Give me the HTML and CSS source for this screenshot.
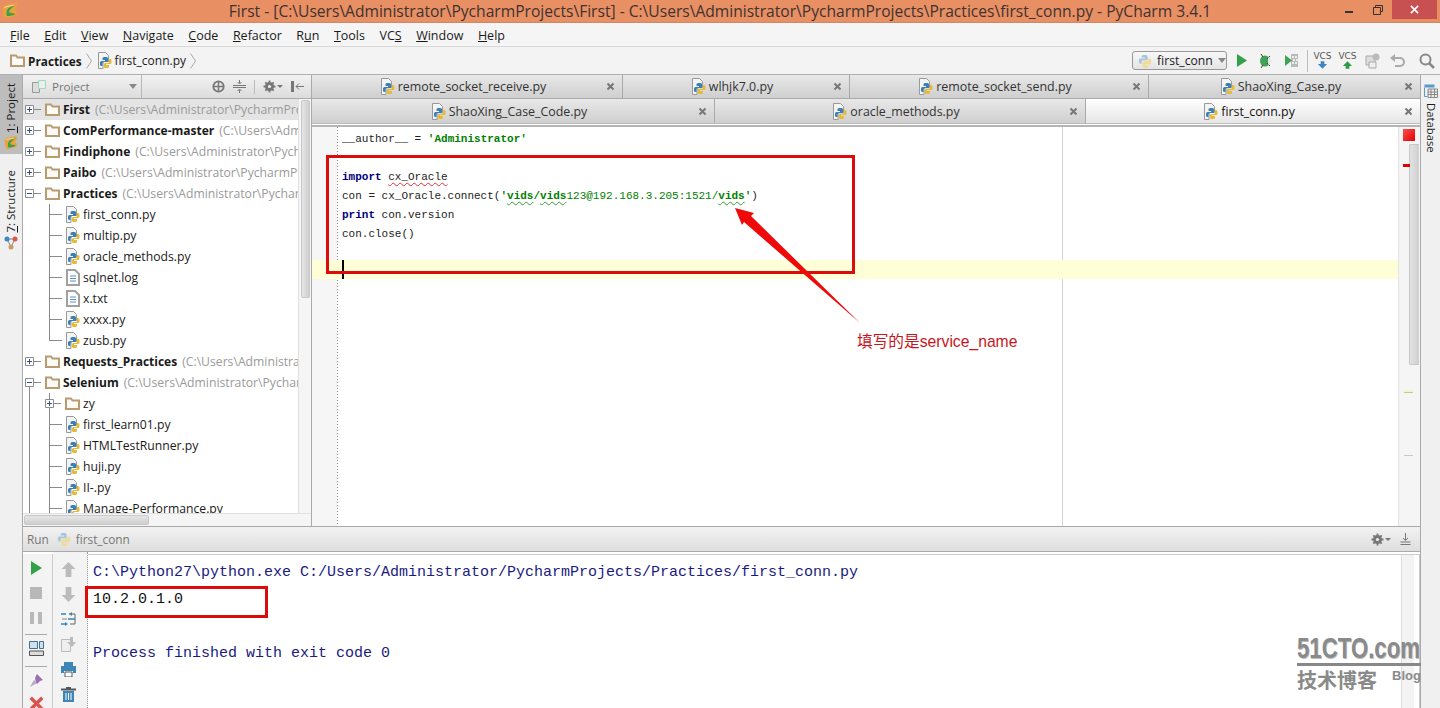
FILE: index.html
```html
<!DOCTYPE html>
<html lang="en">
<head>
<meta charset="utf-8">
<title>PyCharm</title>
<link rel="stylesheet" href="styles.css">
</head>
<body>
<svg class="defs" width="0" height="0" aria-hidden="true">
  <symbol id="py" viewBox="0 0 14 17">
    <path d="M.5.5h7l3 3v6H5v7H.5z" fill="#f4f4f4" stroke="#999"/>
    <path d="M6 5h2.5A1.5 1.5 0 0 1 10 6.500V10H6a1.500 1.500 0 0 0-1.500 1.500V14h-1A1.500 1.500 0 0 1 2 12.500v-2A1.500 1.500 0 0 1 3.500 9H7V8H4.500V6.500A1.500 1.500 0 0 1 6 5z" fill="#3e7fb3"/>
    <path d="M11 7h1a1.500 1.500 0 0 1 1.500 1.500v2A1.500 1.500 0 0 1 12 12H8v1h3v1.500A1.500 1.500 0 0 1 9.500 16h-2A1.500 1.500 0 0 1 6 14.500V12a1.500 1.500 0 0 1 1.500-1H10a1 1 0 0 0 1-1z" fill="#e6bb33"/>
  </symbol>
  <symbol id="snake" viewBox="0 0 16 16">
    <path d="M6 1h3a2 2 0 0 1 2 2v4H6a2 2 0 0 0-2 2v2H3a2 2 0 0 1-2-2V7a2 2 0 0 1 2-2h5V4H4V3a2 2 0 0 1 2-2z" fill="#a9c4dc"/>
    <path d="M12 5h1a2 2 0 0 1 2 2v3a2 2 0 0 1-2 2H8v1h4v1a2 2 0 0 1-2 2H7a2 2 0 0 1-2-2V10a2 2 0 0 1 2-2h3a2 2 0 0 0 2-2z" fill="#f0dc9a"/>
  </symbol>
  <symbol id="folder" viewBox="0 0 15 13">
    <path d="M1 12V1.500h5l1.500 2H14V12z" fill="#fbfaf7" stroke="#b89c70" stroke-width="2"/>
  </symbol>
  <symbol id="txt" viewBox="0 0 14 17">
    <path d="M1 1h8l4 4v11H1z" fill="#fff" stroke="#a0a0a0" stroke-width="2"/>
    <path d="M4 7h6M4 9.500h6M4 12h6" stroke="#5b8fc0"/>
  </symbol>
  <symbol id="plus" viewBox="0 0 9 9">
    <path d="M.5.5h8v8h-8z" fill="#fff" stroke="#8c8c8c"/>
    <path d="M2 4.500h5M4.500 2v5" stroke="#33508c"/>
  </symbol>
  <symbol id="minus" viewBox="0 0 9 9">
    <path d="M.5.5h8v8h-8z" fill="#fff" stroke="#8c8c8c"/>
    <path d="M2 4.500h5" stroke="#33508c"/>
  </symbol>
  <symbol id="x" viewBox="0 0 9 9">
    <path d="M1.500 1.500l6 6M7.500 1.500l-6 6" stroke="#777" stroke-width="2"/>
  </symbol>
  <symbol id="logo" viewBox="0 0 16 16">
    <path d="M1 3.500C5 1 10 .5 15 .5c0 3-1 5-3 6 2 1 3 3 3 5-4 2-8 3-12 3.500C1 11 .5 7 1 3.500z" fill="#e9a33a"/>
    <path d="M13 2.500C8 3 5 5.500 4.500 9c-.2 1.500 0 3 .5 4 3 0 6-.5 8.500-2-2-1-5-1.200-6.500-1.500 0-2.500 3-5 6-7z" fill="#3f9d4d"/>
    <path d="M2.500 4.500c3-1.200 6-1.800 9-2" fill="none" stroke="#f6dba5"/>
  </symbol>
  <symbol id="gear" viewBox="0 0 13 13">
    <circle cx="6.500" cy="6.500" r="3.300" fill="none" stroke="#777" stroke-width="2.400"/>
    <path d="M6.500.5v12M.5 6.500h12M2.300 2.300l8.400 8.400M10.700 2.300l-8.400 8.400" stroke="#777" stroke-width="1.800"/>
    <circle cx="6.500" cy="6.500" r="1.600" fill="#eee"/>
  </symbol>
  <symbol id="play" viewBox="0 0 13 16"><path d="M1 1l11 7-11 7z" fill="#34a04a"/></symbol>
</svg>

<div class="app">
  <header class="titlebar">
    <svg class="logo"><use href="#logo"/></svg>
    <div class="title">First - [C:\Users\Administrator\PycharmProjects\First] - C:\Users\Administrator\PycharmProjects\Practices\first_conn.py - PyCharm 3.4.1</div>
    <div class="winctl">
      <span class="win-min"></span>
      <svg class="win-max" viewBox="0 0 10 10"><path d="M2.500 2.500V.5h7v6h-2M.5 2.500h7v7h-7z" fill="none" stroke="#333"/></svg>
      <span class="win-close"><svg viewBox="0 0 10 10"><path d="M1 1l8 8M9 1l-8 8" stroke="#fff" stroke-width="1.800"/></svg></span>
    </div>
  </header>

  <nav class="menubar">
    <span><u>F</u>ile</span><span><u>E</u>dit</span><span><u>V</u>iew</span><span><u>N</u>avigate</span><span><u>C</u>ode</span><span><u>R</u>efactor</span><span>R<u>u</u>n</span><span><u>T</u>ools</span><span>VC<u>S</u></span><span><u>W</u>indow</span><span><u>H</u>elp</span>
  </nav>

  <div class="navbar">
    <svg class="i-folder"><use href="#folder"/></svg>
    <b class="crumb">Practices</b>
    <svg class="chev" viewBox="0 0 6 16"><path d="M.5.5l5 7.500-5 7.500" fill="none" stroke="#aaa"/></svg>
    <svg class="i-py"><use href="#py"/></svg>
    <span class="crumb-file">first_conn.py</span>
    <svg class="chev" viewBox="0 0 6 16"><path d="M.5.5l5 7.500-5 7.500" fill="none" stroke="#aaa"/></svg>
    <div class="nav-tools">
      <div class="combo">
        <svg class="i-snake"><use href="#snake"/></svg>
        <span>first_conn</span>
        <i class="caret"></i>
      </div>
      <svg class="t-play"><use href="#play"/></svg>
      <svg class="t-bug" viewBox="0 0 16 16"><ellipse cx="7" cy="8" rx="5" ry="5.500" fill="#3fa355"/><path d="M12 3l-3 3M12 13l-3-3M13 8h-3M3 1l2 3M3 15l2-3" stroke="#3a3a3a"/><path d="M10 4l4 4-4 4z" fill="#e6e6e6"/></svg>
      <svg class="t-cov" viewBox="0 0 15 15"><path d="M1 2l7 5.500L1 13z" fill="#3fa355"/><path d="M7 1h7v13H7z" fill="#888" opacity=".55"/><path d="M8 3h2v2H8zM11 3h2v2h-2zM9 6h2v2H9zM12 6h2v2h-2zM8 9h2v2H8zM11 9h2v2h-2z" fill="#eee"/></svg>
      <i class="t-div"></i>
      <span class="vcs"><em>VCS</em><svg viewBox="0 0 12 8"><path d="M4 0h4v3h3L6 8 1 3h3z" fill="#3d86c6"/></svg></span>
      <span class="vcs up"><em>VCS</em><svg viewBox="0 0 12 8"><path d="M4 8h4V5h3L6 0 1 5h3z" fill="#2d9a45"/></svg></span>
      <svg class="t-hist" viewBox="0 0 16 16"><path d="M1 3h9v9H1z" fill="#ddd" stroke="#aaa"/><path d="M4 9h7v6H4z" fill="#eee" stroke="#aaa"/><circle cx="11" cy="4" r="3.500" fill="#bbb"/></svg>
      <svg class="t-undo" viewBox="0 0 15 15"><path d="M4 5h6a3.500 3.500 0 0 1 0 8H5" fill="none" stroke="#aaa" stroke-width="2"/><path d="M5 1v8L0 5z" fill="#aaa"/></svg>
      <svg class="t-search" viewBox="0 0 16 16"><circle cx="6.500" cy="6.500" r="5" fill="none" stroke="#888" stroke-width="2"/><path d="M10 10l5 5" stroke="#888" stroke-width="2.500"/></svg>
    </div>
  </div>

  <div class="main">
    <aside class="leftstrip">
      <div class="vtab active"><span><u>1</u>: Project</span><svg class="vtab-ic"><use href="#logo"/></svg></div>
      <div class="vtab"><span><u>7</u>: Structure</span><svg class="vtab-ic" viewBox="0 0 14 14"><path d="M3 3l4 8 4-8" stroke="#888" fill="none"/><path d="M3 3h8" stroke="#888"/><circle cx="3" cy="3" r="2.500" fill="#3f86c4"/><circle cx="11" cy="3" r="2.500" fill="#d65a4a"/><circle cx="7" cy="11" r="2.500" fill="#c79a62"/></svg></div>
    </aside>

    <div class="center">
      <div class="top">
        <section class="project">
          <div class="proj-head">
            <div class="proj-title">
              <svg class="ph-ic" viewBox="0 0 14 13"><path d="M.5 2.500h7v10h-7z" fill="#ddd" stroke="#999"/><path d="M6.500.5h7v8h-7z" fill="#eee" stroke="#9db"/></svg>
              <span>Project</span>
              <i class="caret"></i>
            </div>
            <div class="proj-tools">
              <svg viewBox="0 0 13 13"><circle cx="6.500" cy="6.500" r="5.200" fill="none" stroke="#777" stroke-width="1.800"/><path d="M6.500 1v11M1 6.500h11" stroke="#777" stroke-width="1.500"/></svg>
              <svg viewBox="0 0 13 13"><path d="M0 5.500h13M0 7.500h13" stroke="#777"/><path d="M6.500 0v3M4.500 2l2 2 2-2M6.500 13v-3M4.500 11l2-2 2 2" stroke="#777" fill="none"/></svg>
              <i class="t-div short"></i>
              <svg class="gear"><use href="#gear"/></svg>
              <i class="mini-caret"></i>
              <svg viewBox="0 0 13 13"><path d="M1.500 1v11" stroke="#777" stroke-width="3"/><path d="M5 6.500h8M8 3.500l-3 3 3 3" stroke="#777" fill="none"/></svg>
            </div>
          </div>
          <div class="proj-body">
            <div class="tree">
              <div class="row root sel"><svg class="exp"><use href="#plus"/></svg><svg class="i-folder"><use href="#folder"/></svg><b>First</b><span class="path">(C:\Users\Administrator\PycharmProjects\First)</span></div>
              <div class="row root"><svg class="exp"><use href="#plus"/></svg><svg class="i-folder"><use href="#folder"/></svg><b>ComPerformance-master</b><span class="path">(C:\Users\Administrator\PycharmProjects)</span></div>
              <div class="row root"><svg class="exp"><use href="#plus"/></svg><svg class="i-folder"><use href="#folder"/></svg><b>Findiphone</b><span class="path">(C:\Users\Administrator\PycharmProjects)</span></div>
              <div class="row root"><svg class="exp"><use href="#plus"/></svg><svg class="i-folder"><use href="#folder"/></svg><b>Paibo</b><span class="path">(C:\Users\Administrator\PycharmProjects)</span></div>
              <div class="row root"><svg class="exp"><use href="#minus"/></svg><svg class="i-folder"><use href="#folder"/></svg><b>Practices</b><span class="path">(C:\Users\Administrator\PycharmProjects)</span></div>
              <div class="row leaf"><svg class="i-py"><use href="#py"/></svg><span>first_conn.py</span></div>
              <div class="row leaf"><svg class="i-py"><use href="#py"/></svg><span>multip.py</span></div>
              <div class="row leaf"><svg class="i-py"><use href="#py"/></svg><span>oracle_methods.py</span></div>
              <div class="row leaf"><svg class="i-py"><use href="#txt"/></svg><span>sqlnet.log</span></div>
              <div class="row leaf"><svg class="i-py"><use href="#txt"/></svg><span>x.txt</span></div>
              <div class="row leaf"><svg class="i-py"><use href="#py"/></svg><span>xxxx.py</span></div>
              <div class="row leaf last"><svg class="i-py"><use href="#py"/></svg><span>zusb.py</span></div>
              <div class="row root"><svg class="exp"><use href="#plus"/></svg><svg class="i-folder"><use href="#folder"/></svg><b>Requests_Practices</b><span class="path">(C:\Users\Administrator\PycharmProjects)</span></div>
              <div class="row root open"><svg class="exp"><use href="#minus"/></svg><svg class="i-folder"><use href="#folder"/></svg><b>Selenium</b><span class="path">(C:\Users\Administrator\PycharmProjects)</span></div>
              <div class="row sub"><svg class="exp"><use href="#plus"/></svg><svg class="i-folder"><use href="#folder"/></svg><span>zy</span></div>
              <div class="row leaf cont"><svg class="i-py"><use href="#py"/></svg><span>first_learn01.py</span></div>
              <div class="row leaf cont"><svg class="i-py"><use href="#py"/></svg><span>HTMLTestRunner.py</span></div>
              <div class="row leaf cont"><svg class="i-py"><use href="#py"/></svg><span>huji.py</span></div>
              <div class="row leaf cont"><svg class="i-py"><use href="#py"/></svg><span>II-.py</span></div>
              <div class="row leaf cont"><svg class="i-py"><use href="#py"/></svg><span>Manage-Performance.py</span></div>
            </div>
            <div class="vscroll"><i></i></div>
          </div>
          <div class="hscroll"><i></i></div>
        </section>

        <section class="editor">
          <div class="tabrow">
            <div class="tab w311"><i></i><span class="tab-label"><svg class="i-py"><use href="#py"/></svg>remote_socket_receive.py</span><svg class="tab-x"><use href="#x"/></svg></div>
            <div class="tab w227"><i></i><span class="tab-label"><svg class="i-py"><use href="#py"/></svg>wlhjk7.0.py</span><svg class="tab-x"><use href="#x"/></svg></div>
            <div class="tab w299"><i></i><span class="tab-label"><svg class="i-py"><use href="#py"/></svg>remote_socket_send.py</span><svg class="tab-x"><use href="#x"/></svg></div>
            <div class="tab w271"><i></i><span class="tab-label"><svg class="i-py"><use href="#py"/></svg>ShaoXing_Case.py</span><svg class="tab-x"><use href="#x"/></svg></div>
          </div>
          <div class="tabrow second">
            <div class="tab w403"><i></i><span class="tab-label"><svg class="i-py"><use href="#py"/></svg>ShaoXing_Case_Code.py</span><svg class="tab-x"><use href="#x"/></svg></div>
            <div class="tab w371"><i></i><span class="tab-label"><svg class="i-py"><use href="#py"/></svg>oracle_methods.py</span><svg class="tab-x"><use href="#x"/></svg></div>
            <div class="tab w334 on"><i></i><span class="tab-label"><svg class="i-py"><use href="#py"/></svg>first_conn.py</span><svg class="tab-x"><use href="#x"/></svg></div>
          </div>
          <div class="edit-body">
            <div class="code">
              <div class="ln">__author__ = <s>'Administrator'</s></div>
              <div class="ln"></div>
              <div class="ln"><b>import</b> <span class="err">cx_Oracle</span></div>
              <div class="ln">con = cx_Oracle.connect(<s>'<span class="typo">vids</span>/<span class="typo">vids</span><span class="num">123@192.168.3.205:1521/</span><span class="typo">vids</span>'</s>)</div>
              <div class="ln"><b>print</b> con.version</div>
              <div class="ln">con.close()</div>
              <div class="ln"></div>
              <div class="ln cur"><i class="caretline"></i></div>
            </div>
            <div class="stripe">
              <i class="ok"></i>
              <i class="thumb"></i>
              <i class="mark-r"></i>
              <i class="mark-y"></i>
              <i class="mark-y2"></i>
            </div>
          </div>
        </section>
      </div>

      <section class="run">
        <div class="run-head">
          <span>Run</span>
          <svg class="i-snake"><use href="#snake"/></svg>
          <span>first_conn</span>
          <div class="run-tools">
            <svg class="gear"><use href="#gear"/></svg>
            <i class="mini-caret"></i>
            <svg class="pin" viewBox="0 0 12 13"><path d="M6 0v7M3.500 5L6 7.500 8.500 5M1 9h10M1 11.500h10" stroke="#777" fill="none"/></svg>
          </div>
        </div>
        <div class="run-body">
          <div class="rcol c1">
            <svg class="r-play"><use href="#play"/></svg>
            <i class="r-stop"></i>
            <i class="r-pause"></i>
            <i class="r-sep"></i>
            <svg class="r-ic" viewBox="0 0 15 15"><path d="M.5.5h8v7h-8zM10.500.5h4v7h-4z" fill="#cfe0ee" stroke="#47708f"/><path d="M.5 10h14v4.500H.5z" fill="#ddd" stroke="#555"/></svg>
            <i class="r-sep"></i>
            <svg class="r-ic" viewBox="0 0 15 15"><path d="M8 1l6 6-3 1-3 3-1-1-1-5z" fill="#9b6fb3"/><path d="M5 7l-4 7 7-4" fill="#b9a3c6"/></svg>
            <svg class="r-ic" viewBox="0 0 13 13"><path d="M1.500 1.500l10 10M11.500 1.500l-10 10" stroke="#d9534f" stroke-width="3"/></svg>
          </div>
          <div class="rcol c2">
            <svg class="r-ic" viewBox="0 0 13 13"><path d="M6.500 0l6 6H9v7H4V6H.5z" fill="#bbb"/></svg>
            <svg class="r-ic" viewBox="0 0 13 13"><path d="M6.500 13l6-6H9V0H4v7H.5z" fill="#bbb"/></svg>
            <svg class="r-ic" viewBox="0 0 15 15"><path d="M0 2h5M0 12h5M7 7h7" stroke="#3d86b6" stroke-width="1.500"/><path d="M8 2h6v10H9" stroke="#666" fill="none"/><path d="M1 7h5" stroke="#888"/><path d="M11 0l-3 2 3 2zM4 10l3 2-3 2z" fill="#3d86b6"/></svg>
            <svg class="r-ic" viewBox="0 0 15 15"><path d="M.5 2.500h9v12h-9z" fill="#eee" stroke="#bbb"/><path d="M9 0v5H6l5 5 4-5h-3V0z" fill="#bbb"/></svg>
            <svg class="r-ic" viewBox="0 0 15 15"><path d="M3 0h9v4H3z" fill="#3d86b6"/><path d="M0 4h15v7h-3V9H3v2H0z" fill="#3d86b6"/><path d="M4 10h7v5H4z" fill="#fff" stroke="#555"/></svg>
            <svg class="r-ic" viewBox="0 0 15 15"><path d="M0 2.500h15" stroke="#555" stroke-width="2"/><path d="M5 1h5" stroke="#555" stroke-width="2"/><path d="M2 4h11v11H2z" fill="#3d86b6"/><path d="M5 6v7M7.500 6v7M10 6v7" stroke="#fff"/></svg>
          </div>
          <div class="console">
            <pre class="out cmd">C:\Python27\python.exe C:/Users/Administrator/PycharmProjects/Practices/first_conn.py</pre>
            <pre class="out">10.2.0.1.0</pre>
            <pre class="out"> </pre>
            <pre class="out cmd">Process finished with exit code 0</pre>
          </div>
          <div class="con-stripe"></div>
        </div>
      </section>
    </div>

    <aside class="rightstrip">
      <svg class="db" viewBox="0 0 14 14"><path d="M.5.5h10v3h-10z" fill="#5b9ac9"/><path d="M.5 3.500v9h3" fill="none" stroke="#5b9ac9"/><path d="M4 5h9.500v8.500H4z" fill="#eee" stroke="#888"/><path d="M4 8h9.500M4 10.500h9.500M7 5v8.500M10.500 5v8.500" stroke="#888"/></svg>
      <span>Database</span>
    </aside>
  </div>

  <div class="anno box1"></div>
  <div class="anno box2"></div>
  <svg class="anno arrow" viewBox="0 0 140 130"><polygon points="5,2 24,7 21,10 130,117 14,16 12,19" fill="#ee0a0a"/></svg>
  <div class="anno note">填写的是service_name</div>
  <div class="anno mark">
    <div class="mark-top">51CTO.com</div>
    <div class="mark-line"></div>
    <div class="mark-sub"><span>技术博客</span><em>Blog</em></div>
  </div>
</div>
</body>
</html>
```
FILE: styles.css
```css
* { box-sizing: border-box; }
html, body { margin: 0; height: 100%; overflow: hidden; }
body { font: 12.2px "Open Sans", "Liberation Sans", sans-serif; color: #1a1a1a; background: #f0f0f0; }
.defs { position: absolute; }
svg { display: block; flex: none; }
.app { position: relative; width: 1440px; height: 708px; display: flex; flex-direction: column; overflow: hidden; }

/* title */
.titlebar { height: 23px; background: #e98f64; border-bottom: 1px solid #c98a6a; display: grid; grid-template-columns: 1fr auto 1fr; align-items: center; flex: none; }
.logo { width: 16px; height: 16px; margin-left: 2px; }
.title { font-size: 15.6px; color: #3d3330; white-space: nowrap; margin-top: -1px; }
.winctl { justify-self: end; display: flex; align-items: flex-start; height: 100%; padding-right: 3px; }
.win-min { width: 8px; height: 2px; background: #333; margin: 11px 0 0; }
.win-max { width: 10px; height: 10px; margin: 5px 0 0 20px; }
.win-close { width: 45px; height: 19px; margin-left: 9px; background: #c75050; display: flex; align-items: center; justify-content: center; }
.win-close svg { width: 9px; height: 9px; }

/* menu */
.menubar { height: 24px; background: #f5f5f5; border-bottom: 1px solid #d8d8d8; display: flex; align-items: center; gap: 14.5px; padding: 1px 0 0 10px; flex: none; font-size: 12.5px; }

/* nav */
.navbar { height: 28px; background: #f3f3f3; border-bottom: 1px solid #b0b0b0; display: flex; align-items: center; padding: 0 5px 0 10px; flex: none; }
.i-folder { width: 15px; height: 13px; }
.crumb { margin-left: 3px; font-weight: 700; font-size: 11.8px; }
.chev { width: 6px; height: 16px; margin: 0 6px 0 4px; }
.i-py { width: 14px; height: 17px; }
.crumb-file { margin-left: 3px; font-size: 12px; }
.navbar .chev:last-of-type { margin-left: 4px; }
.nav-tools { margin-left: auto; display: flex; align-items: center; }
.combo { width: 95px; height: 19px; border: 1px solid #999; border-radius: 3px; background: linear-gradient(#f8f8f8, #e4e4e4); display: flex; align-items: center; padding: 0 5px; gap: 5px; }
.i-snake { width: 14px; height: 14px; }
.caret { width: 0; height: 0; border: 4px solid transparent; border-top: 5px solid #888; border-bottom: 0; margin-left: auto; }
.t-play { width: 12px; height: 15px; margin-left: 9px; }
.t-bug { width: 16px; height: 16px; margin-left: 10px; }
.t-cov { width: 15px; height: 15px; margin-left: 10px; }
.t-div { width: 1px; height: 22px; background: #bbb; margin-left: 8px; }
.t-div.short { height: 14px; margin: 0; }
.vcs { width: 15px; height: 19px; margin-left: 7px; display: flex; flex-direction: column; align-items: center; }
.vcs + .vcs { margin-left: 10px; }
.vcs em { font: 9px/10px "DejaVu Sans", sans-serif; color: #555; }
.vcs svg { width: 11px; height: 8px; }
.t-hist { width: 16px; height: 16px; margin-left: 10px; }
.t-undo { width: 15px; height: 15px; margin-left: 9px; }
.t-search { width: 16px; height: 16px; margin-left: 14px; }

/* main */
.main { flex: 1; min-height: 0; display: flex; }
.leftstrip { width: 23px; flex: none; background: #f0f0f0; border-right: 1px solid #aaa; display: flex; flex-direction: column; gap: 8px; }
.vtab { width: 22px; display: flex; flex-direction: column; align-items: center; gap: 3px; padding: 8px 0 4px; }
.vtab.active { background: #bdbdbd; }
.vtab span { writing-mode: vertical-rl; transform: rotate(180deg); font-size: 11.5px; line-height: 22px; }
.vtab-ic { width: 14px; height: 14px; }
.center { flex: 1; min-width: 0; display: flex; flex-direction: column; }
.top { height: 452px; display: flex; flex: none; border-bottom: 1px solid #a8a8a8; }
.project { width: 289px; flex: none; display: flex; flex-direction: column; border-right: 1px solid #aaa; background: #fff; }
.proj-head { height: 24px; background: linear-gradient(#f2f2f2, #dcdcdc); border-bottom: 1px solid #aaa; display: flex; align-items: center; flex: none; }
.proj-title { width: 119px; height: 100%; display: flex; align-items: center; gap: 6px; padding: 0 4px 0 9px; border-right: 1px solid #b8b8b8; color: #777; font-size: 11.5px; }
.ph-ic { width: 14px; height: 13px; }
.proj-tools { flex: 1; display: flex; align-items: center; justify-content: flex-end; gap: 8px; padding-right: 7px; }
.proj-tools svg { width: 13px; height: 13px; }
.mini-caret { width: 0; height: 0; border: 3px solid transparent; border-top: 3px solid #777; border-bottom: 0; margin-left: -7px; }
.proj-body { flex: 1; min-height: 0; display: flex; }
.tree { flex: 1; min-width: 0; overflow: hidden; }
.row { height: 21px; display: flex; align-items: center; white-space: nowrap; overflow: hidden; font-size: 12.2px; }
.row b { font-weight: 700; font-size: 12px; }
.row > .path { color: #9a9a9a; margin-left: 5px; }
.row.sel { background: #e4e4e4; }
.root { padding-left: 2px; background: linear-gradient(#8a8a8a, #8a8a8a) 11px 10px / 7px 1px no-repeat; }
.root.open { background: linear-gradient(#8a8a8a, #8a8a8a) 11px 10px / 7px 1px no-repeat, linear-gradient(#8a8a8a, #8a8a8a) 6px 14px / 1px 7px no-repeat; }
.root.sel { background: linear-gradient(#8a8a8a, #8a8a8a) 11px 10px / 7px 1px no-repeat, #e4e4e4; }
.exp { width: 9px; height: 9px; }
.root .i-folder { margin-left: 11px; margin-right: 3px; }
.leaf { padding-left: 43px; background:
  linear-gradient(#8a8a8a, #8a8a8a) 26px 0 / 1px 100% no-repeat,
  linear-gradient(#8a8a8a, #8a8a8a) 26px 10px / 13px 1px no-repeat; }
.leaf.last { background:
  linear-gradient(#8a8a8a, #8a8a8a) 26px 0 / 1px 11px no-repeat,
  linear-gradient(#8a8a8a, #8a8a8a) 26px 10px / 13px 1px no-repeat; }
.leaf.cont { background:
  linear-gradient(#8a8a8a, #8a8a8a) 6px 0 / 1px 100% no-repeat,
  linear-gradient(#8a8a8a, #8a8a8a) 26px 0 / 1px 100% no-repeat,
  linear-gradient(#8a8a8a, #8a8a8a) 26px 10px / 13px 1px no-repeat; }
.leaf > span { margin-left: 3px; }
.sub { padding-left: 22px; background:
  linear-gradient(#8a8a8a, #8a8a8a) 6px 0 / 1px 100% no-repeat,
  linear-gradient(#8a8a8a, #8a8a8a) 26px 0 / 1px 6px no-repeat,
  linear-gradient(#8a8a8a, #8a8a8a) 26px 15px / 1px 6px no-repeat,
  linear-gradient(#8a8a8a, #8a8a8a) 31px 10px / 7px 1px no-repeat; }
.sub .i-folder { margin-left: 11px; margin-right: 3px; }
.vscroll { width: 13px; flex: none; background: #f5f5f5; border-left: 1px solid #e0e0e0; padding: 1px 1px 0 2px; }
.vscroll i { display: block; height: 198px; background: linear-gradient(90deg, #e6e6e6, #cfcfcf); border: 1px solid #c8c8c8; border-radius: 2px; }
.hscroll { height: 13px; flex: none; background: #f5f5f5; border-top: 1px solid #e0e0e0; padding: 1px 0 1px 1px; }
.hscroll i { display: block; width: 125px; height: 100%; background: linear-gradient(#e6e6e6, #cfcfcf); border: 1px solid #c8c8c8; border-radius: 2px; }

/* editor */
.editor { flex: 1; min-width: 0; display: flex; flex-direction: column; background: #fff; }
.tabrow { height: 24px; flex: none; display: flex; border-bottom: 1px solid #aaa; }
.tabrow.second { height: 25px; border-bottom: 0; }
.tab { display: grid; grid-template-columns: 1fr auto 1fr; align-items: center; padding-right: 7px; background: linear-gradient(#e8e8e8, #cfcfcf); border-right: 1px solid #aaa; flex: none; }
.tab:last-child { border-right: 0; }
.tab-label { display: flex; align-items: center; gap: 3px; white-space: nowrap; color: #333; font-size: 12.4px; }
.tab-x { width: 9px; height: 9px; justify-self: end; }
.tab.on { background: linear-gradient(#fff, #e6e6e6); }
.tab.on .tab-label { color: #111; }
.w311 { width: 311px; } .w227 { width: 227px; } .w299 { width: 299px; } .w271 { width: 271px; }
.w403 { width: 403px; } .w371 { width: 371px; } .w334 { width: 334px; }
.second .tab { border-bottom: 1px solid #bbb; }
.edit-body { flex: 1; min-height: 0; display: flex; border-top: 2px solid #b4b4b4; margin-top: 1px; }
.code { flex: 1; min-width: 0; font: 11px/25px "Liberation Mono", monospace; color: #222; background:
  repeating-linear-gradient(#888 0 1px, transparent 1px 3px) 25px 0 / 1px 100% no-repeat,
  linear-gradient(#d4d4d4, #d4d4d4) 750px 0 / 1px 100% no-repeat,
  linear-gradient(#f6f6f6, #f6f6f6) 0 0 / 25px 100% no-repeat,
  #fff; }
.ln { height: 19px; padding-left: 30px; white-space: pre; }
.ln b { color: #000080; }
.ln s { text-decoration: none; color: #008000; font-weight: 700; }
.num { font-weight: 400; letter-spacing: 0; }
.err { text-decoration: underline wavy #d33 1px; text-underline-offset: 2px; }
.typo { text-decoration: underline wavy #3a9a3a 1px; text-underline-offset: 2px; }
.cur { background: #ffffd7; position: relative; }
.caretline { display: block; width: 2px; height: 19px; background: #000; }
.stripe { width: 22px; flex: none; background: #f5f5f5; border-left: 1px solid #e2e2e2; position: relative; }
.ok { position: absolute; left: 4px; top: 2px; width: 12px; height: 12px; background: linear-gradient(135deg, #ff5050, #e00000); }
.thumb { position: absolute; left: 10px; top: 17px; width: 10px; height: 221px; background: linear-gradient(90deg, #e2e2e2, #cfcfcf); border: 1px solid #c8c8c8; border-right: 0; border-radius: 2px 0 0 2px; }
.mark-r { position: absolute; left: 4px; top: 37px; width: 7px; height: 3px; background: #e00000; }
.mark-y { position: absolute; left: 5px; top: 263px; width: 9px; height: 3px; background: #f6f4cf; border-bottom: 1px solid #c9c59a; }
.mark-y2 { position: absolute; left: 5px; top: 328px; width: 9px; height: 1px; background: #cfcbb0; }

/* run */
.run { flex: 1; min-height: 0; display: flex; flex-direction: column; background: #fff; }
.run-head { height: 25px; flex: none; display: flex; align-items: center; gap: 5px; padding: 0 8px 0 4px; background: linear-gradient(#f2f2f2, #dedede); border-bottom: 1px solid #aaa; color: #777; font-size: 11.8px; }
.run-head .i-snake { margin-left: 3px; }
.run-tools { margin-left: auto; display: flex; align-items: center; gap: 8px; }
.run-tools svg { width: 13px; height: 13px; }
.run-body { flex: 1; min-height: 0; display: flex; }
.rcol { flex: none; display: flex; flex-direction: column; align-items: center; background: #f3f3f3; gap: 8px; }
.rcol > * { flex: none; }
.c1 { width: 30px; border-right: 1px solid #ccc; margin-top: 2px; padding: 6px 3px 0 0; }
.c2 { width: 35px; border-right: 1px dotted #999; gap: 10px; padding: 10px 4px 0 0; }
.r-play { width: 13px; height: 16px; }
.r-stop { width: 12px; height: 12px; background: #b8b8b8; margin-top: 3px; }
.r-pause { width: 12px; height: 12px; margin-top: 5px; background: linear-gradient(90deg, #b8b8b8 0 4px, transparent 4px 8px, #b8b8b8 8px); }
.r-sep { width: 22px; height: 1px; background: #aaa; margin: 2px 0 -2px; }
.r-ic { width: 15px; height: 15px; }
.console { flex: 1; min-width: 0; padding: 5px 0 0 5px; border-top: 1px solid #ccc; margin-top: 2px; }
.out { margin: 0; height: 26.85px; font: 15px/26.85px "Liberation Mono", monospace; color: #111; white-space: pre; }
.out.cmd { color: #1a1a80; }
.con-stripe { width: 19px; flex: none; margin-top: 2px; background: #f3f3f3; border-left: 1px solid #ddd; border-right: 1px solid #ccc; border-top: 1px solid #ccc; box-shadow: inset -5px 0 0 #fff; }

/* right strip */
.rightstrip { width: 20px; flex: none; background: #f0f0f0; border-left: 1px solid #aaa; display: flex; flex-direction: column; align-items: center; padding-top: 9px; gap: 5px; }
.db { width: 14px; height: 14px; }
.rightstrip span { writing-mode: vertical-rl; font-size: 11.3px; line-height: 18px; }

/* annotations drawn over the screenshot */
.anno { position: absolute; }
.box1 { left: 326px; top: 155px; width: 529px; height: 119px; border: 3px solid #dd0c0c; }
.box2 { left: 85px; top: 586px; width: 183px; height: 32px; border: 3px solid #dd0c0c; }
.arrow { left: 730px; top: 206px; width: 140px; height: 130px; }
.note { left: 857px; top: 331px; font: 15.7px/22px "Liberation Sans", "Noto Sans CJK SC", sans-serif; color: #c8161d; white-space: nowrap; }
.mark { left: 1297px; top: 633px; width: 124px; color: #8a8a8a; }
.mark-top { font: 700 30px/30px "Liberation Sans", sans-serif; white-space: nowrap; text-shadow: 1px 1px 0 #bbb; transform: scaleX(.74); transform-origin: 0 0; }
.mark-line { height: 3px; background: #888; }
.mark-sub { display: flex; align-items: flex-start; justify-content: space-between; margin-top: 3px; }
.mark-sub span { font: 700 20px/22px "Noto Sans CJK SC", sans-serif; }
.mark-sub em { font: 700 13px/14px "Liberation Sans", sans-serif; }
```
